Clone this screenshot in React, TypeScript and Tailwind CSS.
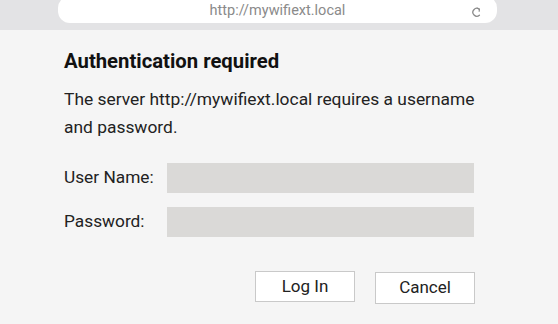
import React from "react";

export default function App() {
  return (
    <div className="w-[558px] h-[324px] overflow-hidden bg-[#f5f5f5] text-[#222]" style={{ fontFamily: "Roboto, 'Liberation Sans', sans-serif" }}>
      <div className="h-[30px] bg-[#e3e3e5] flex">
        <div className="ml-[58px] -mt-[4px] w-[439px] h-[27px] bg-white rounded-[12px] flex items-center relative">
          <div className="flex-1 text-center text-[14.5px] leading-[20px] text-[#8a8a8a] pt-[3px]">http://mywifiext.local</div>
          <svg className="absolute left-[413px] top-[10px]" width="11" height="12" viewBox="0 0 11 12" fill="none">
            <path d="M8.2 3.2 A3.9 3.9 0 1 0 8.4 9.2" stroke="#8a8a8a" strokeWidth="1.3" strokeLinecap="round" />
            <path d="M6.2 2.2 L8.4 3 L8.2 5.2" stroke="#8a8a8a" strokeWidth="1.2" strokeLinecap="round" strokeLinejoin="round" />
          </svg>
        </div>
      </div>
      <div className="pl-[64px] pt-[19px] w-[477px]">
        <div className="text-[20.3px] leading-[24px] font-bold text-[#111]">Authentication required</div>
        <div className="mt-[12px] text-[17.4px] leading-[28px] text-[#222]">
          The server http://mywifiext.local requires a username and password.
        </div>
        <div className="mt-[22px] flex flex-col gap-[14px]">
          <div className="flex items-center">
            <div className="w-[103px] text-[17.3px]">User Name:</div>
            <div className="w-[307px] h-[30px] bg-[#dad9d7]" />
          </div>
          <div className="flex items-center">
            <div className="w-[103px] text-[17.3px]">Password:</div>
            <div className="w-[307px] h-[30px] bg-[#dad9d7]" />
          </div>
        </div>
        <div className="mt-[34px] flex gap-[20px] pl-[191px]">
          <button className="w-[100px] h-[31px] bg-white border border-[#c9c9c9] text-[17px] text-[#222]">Log In</button>
          <button className="w-[100px] h-[32px] mt-[1px] bg-white border border-[#c9c9c9] text-[17px] text-[#222]">Cancel</button>
        </div>
      </div>
    </div>
  );
}
